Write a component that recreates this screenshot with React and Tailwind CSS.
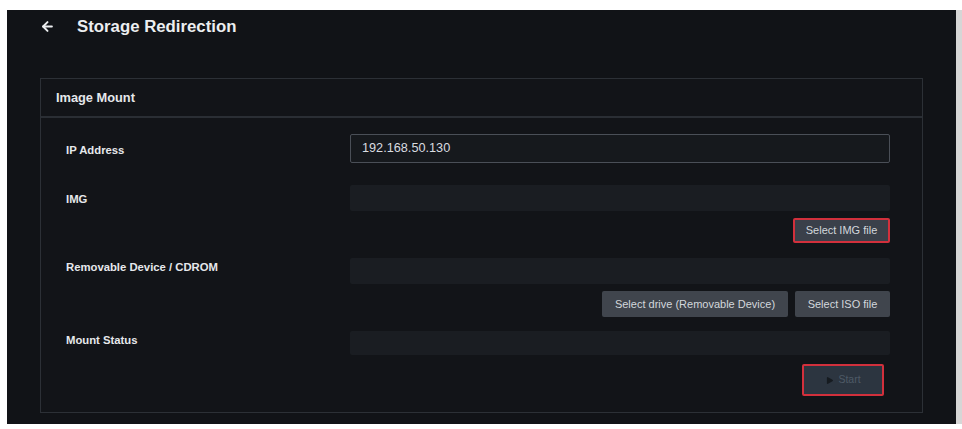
import React from 'react';
import { ArrowLeft, Play } from 'lucide-react';

const font = { fontFamily: '"Liberation Sans", Arial, sans-serif' };

function Field({ value, bordered }) {
  return (
    <div
      className={
        bordered
          ? 'flex h-[29px] items-center rounded-[2px] border border-[#4a4f57] bg-[#16191d] px-[11px] text-[12.7px] text-[#d9dce0]'
          : 'h-[26px] rounded-[2px] bg-[#1a1d22]'
      }
    >
      {value}
    </div>
  );
}

function Btn({ children, danger, className = '' }) {
  return (
    <button
      type="button"
      className={`flex items-center justify-center whitespace-nowrap rounded-[2px] text-[11px] text-[#d3d7dc] ${
        danger ? 'border-2 border-[#d2303c] bg-[#3a404a]' : 'bg-[#40454d]'
      } ${className}`}
    >
      {children}
    </button>
  );
}

function Row({ label, labelPad, children }) {
  return (
    <div className="flex">
      <div className={`w-[284px] shrink-0 text-[11.3px] font-bold text-[#e6e8eb] ${labelPad}`}>{label}</div>
      <div className="flex flex-1 flex-col gap-[7px]">{children}</div>
    </div>
  );
}

export default function App() {
  return (
    <div style={font} className="flex h-[429px] w-[962px] bg-white pt-[10px] pb-[5px] pl-[7px]">
      <div className="flex flex-1 flex-col bg-[#111317]">
        <div className="flex h-[32px] items-center pt-[1px] pl-[33px]">
          <ArrowLeft size={15} strokeWidth={3.2} className="text-[#eceef0]" />
          <h1 className="ml-[22px] text-[16.8px] font-bold text-[#eceef0]">Storage Redirection</h1>
        </div>

        <section className="mx-[33px] mt-[36px] mb-[11px] flex flex-1 flex-col border border-[#2c3036] bg-[#121418]">
          <div className="flex h-[39px] items-center border-b-2 border-[#2a2e34] pl-[15px] text-[12.8px] font-bold text-[#e6e8eb]">
            Image Mount
          </div>

          <div className="flex flex-col pt-[16px] pr-[32px] pl-[25px]">
            <Row label="IP Address" labelPad="pt-[8px]">
              <Field value="192.168.50.130" bordered />
            </Row>

            <div className="mt-[22px]">
              <Row label="IMG" labelPad="pt-[6px]">
                <Field />
                <div className="flex justify-end">
                  <Btn danger className="h-[25px] w-[97px]">Select IMG file</Btn>
                </div>
              </Row>
            </div>

            <div className="mt-[15px]">
              <Row label="Removable Device / CDROM" labelPad="pt-[1px]">
                <Field />
                <div className="flex justify-end gap-[7px]">
                  <Btn className="h-[26px] w-[186px]">Select drive (Removable Device)</Btn>
                  <Btn className="h-[26px] w-[95px]">Select ISO file</Btn>
                </div>
              </Row>
            </div>

            <div className="mt-[14px]">
              <Row label="Mount Status" labelPad="pt-[1px]">
                <div className="h-[24px] rounded-[2px] bg-[#1a1d22]" />
                <div className="mt-[2px] flex justify-end pr-[6px]">
                  <Btn danger className="h-[32px] w-[82px] gap-[4px] !bg-[#2c3540] text-[#56636f]">
                    <Play size={9} fill="#161b20" strokeWidth={0} />
                    <span className="text-[10.5px] text-[#4e5a66]">Start</span>
                  </Btn>
                </div>
              </Row>
            </div>
          </div>
        </section>
      </div>
      <div className="w-[6px] bg-[#d6d6d6]" />
    </div>
  );
}
